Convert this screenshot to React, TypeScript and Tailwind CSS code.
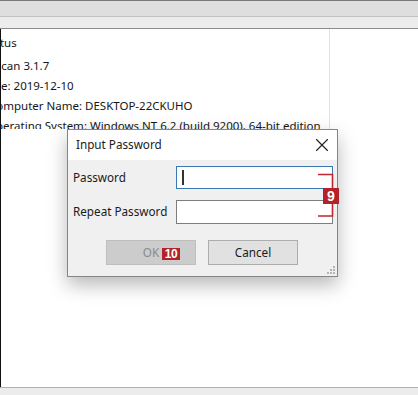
import { X } from "lucide-react"

const infoLines = [
    { text: "Status", shift: "-ml-[18px]", gap: "mb-[3px]" },
    { text: "Scan 3.1.7", shift: "-ml-[6px]", gap: "" },
    { text: "Date: 2019-12-10", shift: "-ml-[19px]", gap: "" },
    { text: "Computer Name: DESKTOP-22CKUHO", shift: "-ml-[12px]", gap: "" },
    { text: "Operating System: Windows NT 6.2 (build 9200), 64-bit edition", shift: "-ml-[14px]", gap: "" },
]

function Badge({ label, className }: { label: string; className: string }) {
    return (
        <div
            className={
                "absolute flex items-center justify-center bg-[#b3212b] text-white font-bold leading-none font-['Liberation_Sans',sans-serif] " +
                className
            }
        >
            {label}
        </div>
    )
}

function ResizeGrip() {
    const dots = [
        [6, 0],
        [3, 3],
        [6, 3],
        [0, 6],
        [3, 6],
        [6, 6],
    ]
    return (
        <svg width="8" height="8" viewBox="0 0 8 8" className="absolute right-[2px] bottom-[2px]">
            {dots.map(([x, y]) => (
                <rect key={`${x}-${y}`} x={x} y={y} width="2" height="2" fill="#b4b4b4" />
            ))}
        </svg>
    )
}

function PasswordDialog() {
    return (
        <div className="absolute left-[67px] top-[129px] w-[271px] h-[148px] flex flex-col border border-[#858585] bg-[#f0f0f0] shadow-[0_8px_18px_rgba(0,0,0,0.28)]">
            <div className="h-[30px] flex items-center justify-between bg-white pl-2 pr-[4px] text-[11.7px] text-[#1b1b1b]">
                <span>Input Password</span>
                <X size={22} strokeWidth={1.25} className="text-[#222]" />
            </div>
            <div className="flex flex-col gap-[11px] pl-[5px] pr-[4px] pt-[6px] text-[11.7px] text-[#1b1b1b]">
                <div className="flex items-center">
                    <span className="w-[103px]">Password</span>
                    <div className="w-[157px] h-[23px] flex items-center border border-[#3a78b5] bg-white pl-[5px]">
                        <div className="w-[1.5px] h-[15px] bg-[#333]" />
                    </div>
                </div>
                <div className="flex items-center">
                    <span className="w-[103px]">Repeat Password</span>
                    <div className="w-[157px] h-[24px] border border-[#7d7d7d] bg-white" />
                </div>
            </div>
            <div className="flex justify-center gap-3 mt-[16px] ml-[-1px] text-[11.7px]">
                <button className="w-[90px] h-[25px] border border-[#bfbfbf] bg-[#cccccc] text-[#8a8a8a]">
                    OK
                </button>
                <button className="w-[90px] h-[25px] border border-[#adadad] bg-[#e1e1e1] text-[#1b1b1b]">
                    Cancel
                </button>
            </div>
            <ResizeGrip />
        </div>
    )
}

export default function App() {
    return (
        <div className="relative w-[418px] h-[395px] overflow-hidden flex flex-col bg-white font-['Noto_Sans',sans-serif]">
            <div className="h-px bg-[#7a7a7a]" />
            <div className="h-[15px] bg-[#dedede]" />
            <div className="h-px bg-[#c2c2c2]" />
            <div className="h-[11px] bg-[#ececec]" />
            <div className="h-px bg-[#8c8c8c]" />

            <div className="flex-1 flex">
                <div className="w-px bg-[#111]" />
                <div className="flex-1 flex flex-col">
                    <div className="flex h-[100px]">
                        <div className="w-[328px] overflow-hidden pt-[4px] text-[11.5px] leading-[20px] text-[#161616]">
                            {infoLines.map((line) => (
                                <div key={line.text} className={"whitespace-nowrap " + line.shift + " " + line.gap}>
                                    {line.text}
                                </div>
                            ))}
                        </div>
                        <div className="w-px bg-[#e2e2e2]" />
                    </div>
                </div>
            </div>

            <div className="h-px bg-[#b0b0b0]" />
            <div className="h-[7px] bg-[#ececec]" />

            <PasswordDialog />

            <svg width="418" height="395" className="absolute left-0 top-0 pointer-events-none">
                <path d="M318 174.5 H332.5 V216 H318" fill="none" stroke="#c0262e" strokeWidth="1.6" />
            </svg>
            <Badge label="9" className="left-[323px] top-[188px] w-[16px] h-[16px] text-[14px]" />
            <Badge label="10" className="left-[162px] top-[248px] w-[18px] h-[12px] text-[12px] tracking-[-0.5px]" />
        </div>
    )
}
